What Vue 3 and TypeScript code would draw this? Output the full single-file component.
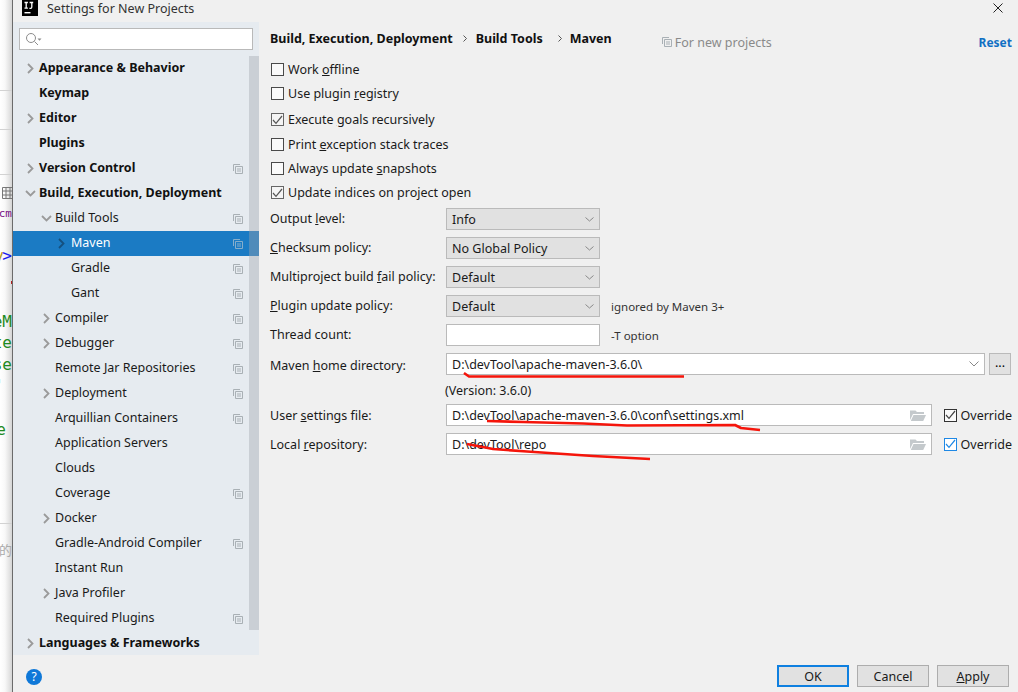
<template>
  <div class="screen">
    <!-- IDE peeking out behind the dialog -->
    <div class="behind">
      <div v-for="y in behindLines" :key="y" class="behind-line" :style="{ top: y + 'px' }"></div>
      <svg class="grid-icon" width="12" height="12" viewBox="0 0 12 12">
        <path d="M.5.5h11v11H.5zM.5 4h11M.5 8h11M4 .5v11M8 .5v11" fill="none" stroke="#777" />
      </svg>
      <span
        v-for="f in fragments"
        :key="f.text"
        class="frag"
        :class="f.kind"
        :style="{ top: f.top + 'px', right: (f.right ?? 0) + 'px' }"
      >{{ f.text }}</span>
      <div class="red-dot"></div>
    </div>

    <div class="dialog">
      <header class="titlebar">
        <svg class="logo" width="16" height="16" viewBox="0 0 16 16">
          <rect width="16" height="16" fill="#000" />
          <rect x="2.500" y="12" width="6" height="1.400" fill="#fff" />
          <path d="M2.500 2.500h3.400M4.200 2.500v5.600M2.500 8.100h3.400M7.600 2.500h3.600M9.800 2.500v4.600q0 1.200-1.200 1.200H7.400" fill="none" stroke="#fff" stroke-width="1.300" />
        </svg>
        <span class="title">Settings for New Projects</span>
        <svg class="close" width="10" height="10" viewBox="0 0 10 10">
          <path d="M.5.5l9 9M9.500.5l-9 9" stroke="#222" fill="none" />
        </svg>
      </header>

      <div class="body">
        <aside class="sidebar">
          <div class="search">
            <svg width="20" height="14" viewBox="0 0 20 14">
              <circle cx="6" cy="6" r="4.500" fill="none" stroke="#8c8c8c" />
              <path d="M9.500 9.500l3.500 3.500" stroke="#8c8c8c" fill="none" />
              <path d="M12.500 6.500h4l-2 2.200z" fill="#8c8c8c" />
            </svg>
          </div>
          <div class="tree-wrap">
            <ul class="tree">
              <li
                v-for="item in treeItems"
                :key="item.label"
                class="row"
                :class="[`lvl-${item.level}`, { selected: item.selected, bold: item.level === 0 }]"
              >
                <span class="arrow">
                  <svg v-if="item.arrow === 'right'" width="9" height="11" viewBox="0 0 9 11">
                    <path d="M2 1l4.500 4.500L2 10" fill="none" :stroke="item.selected ? '#15507f' : '#9a9a9a'" stroke-width="1.800" />
                  </svg>
                  <svg v-else-if="item.arrow === 'down'" width="11" height="9" viewBox="0 0 11 9">
                    <path d="M1 2l4.500 4.500L10 2" fill="none" stroke="#9a9a9a" stroke-width="1.800" />
                  </svg>
                </span>
                <span class="label">{{ item.label }}</span>
                <svg v-if="item.copy" class="copy" width="10" height="10" viewBox="0 0 10 10">
                  <path d="M.5 7V.5H7M2.500 2.500h7v7h-7zM4 5h4M4 7h4" fill="none" :stroke="item.selected ? '#87aecb' : '#a9b0b5'" />
                </svg>
              </li>
            </ul>
            <div class="scrollbar"></div>
          </div>
        </aside>

        <main class="content">
          <div class="crumbs">
            <b>Build, Execution, Deployment</b>
            <svg class="sep" width="4" height="7" viewBox="0 0 4 7">
              <path d="M.5.5l3 3-3 3" fill="none" stroke="#555" />
            </svg>
            <b>Build Tools</b>
            <svg class="sep second" width="4" height="7" viewBox="0 0 4 7">
              <path d="M.5.5l3 3-3 3" fill="none" stroke="#555" />
            </svg>
            <b>Maven</b>
            <span class="scope">
              <svg width="10" height="10" viewBox="0 0 10 10">
                <path d="M.5 7V.5H7M2.500 2.500h7v7h-7zM4 5h4M4 7h4" fill="none" stroke="#a9b0b5" />
              </svg>
              For new projects
            </span>
            <a class="reset">Reset</a>
          </div>

          <div class="checks">
            <label v-for="c in checks" :key="c.pre + c.post" class="check" :style="{ marginTop: c.mt + 'px' }">
              <span class="box" :class="{ on: c.on }">
                <svg v-if="c.on" width="11" height="10" viewBox="0 0 11 10">
                  <path d="M1 5l3 3.400L10 1" fill="none" stroke="#555" stroke-width="1.200" />
                </svg>
              </span>
              <span>{{ c.pre }}<u>{{ c.key }}</u>{{ c.post }}</span>
            </label>
          </div>

          <div class="form">
            <div v-for="s in selects" :key="s.post" class="field">
              <span class="name">{{ s.pre }}<u>{{ s.key }}</u>{{ s.post }}</span>
              <div class="select">
                {{ s.value }}
                <svg width="9" height="5" viewBox="0 0 9 5">
                  <path d="M.5.5l4 3.500 4-3.500" fill="none" stroke="#888" />
                </svg>
              </div>
              <span v-if="s.hint" class="hint">{{ s.hint }}</span>
            </div>
            <div class="field">
              <span class="name">Thread count:</span>
              <div class="input small"></div>
              <span class="hint">-T option</span>
            </div>
          </div>

          <div class="paths">
            <div class="field home">
              <span class="name">Maven <u>h</u>ome directory:</span>
              <div class="input grow">
                D:\devTool\apache-maven-3.6.0\
                <svg width="10" height="6" viewBox="0 0 10 6">
                  <path d="M.5.500L5 5l4.500-4.500" fill="none" stroke="#888" />
                </svg>
              </div>
              <button class="dots">...</button>
            </div>
            <div class="version">(Version: 3.6.0)</div>
            <div v-for="p in files" :key="p.value" class="field file">
              <span class="name">{{ p.pre }}<u>{{ p.key }}</u>{{ p.post }}</span>
              <div class="input grow">
                {{ p.value }}
                <svg width="16" height="12" viewBox="0 0 16 12">
                  <path d="M0 1.500h5.500l1.500 1.500h7v2H3L0 11z" fill="#c4c9cc" />
                  <path d="M3.500 6H16l-2.800 6H.8z" fill="#c4c9cc" />
                </svg>
              </div>
              <label class="check override">
                <span class="box" :class="{ dark: !p.focus, focus: p.focus }">
                  <svg width="11" height="10" viewBox="0 0 11 10">
                    <path d="M1 5l3 3.400L10 1" fill="none" :stroke="p.focus ? '#1e88e5' : '#444'" stroke-width="1.200" />
                  </svg>
                </span>
                <span>Override</span>
              </label>
            </div>
          </div>
        </main>
      </div>

      <footer class="footer">
        <span class="help">?</span>
        <button class="btn primary">OK</button>
        <button class="btn">Cancel</button>
        <button class="btn"><u>A</u>pply</button>
      </footer>
    </div>

    <!-- red marks someone drew over the screenshot -->
    <svg class="scribble" width="1018" height="692" viewBox="0 0 1018 692">
      <g fill="none" stroke="#f5150b" stroke-width="2.600" stroke-linejoin="round">
        <path d="M464 373l5 3.500H684" />
        <path d="M487 421L523 422L583 423.500L627 425.500L735 425L741 428L760 430" />
        <path d="M467 444L493 449L527 451.500L593 456L650 459" />
      </g>
    </svg>
  </div>
</template>

<script setup lang="ts">
interface TreeItem {
  label: string
  level: number
  arrow?: 'right' | 'down'
  copy?: boolean
  selected?: boolean
}

interface Fragment {
  text: string
  kind: string
  top: number
  right?: number
}

const behindLines = [90, 129, 174, 523]

const fragments: Fragment[] = [
  { text: 'cm', kind: 'purple', top: 205 },
  { text: 'y', kind: 'olive', top: 247, right: 8 },
  { text: '>', kind: 'blue', top: 247 },
  { text: 'eM', kind: 'green', top: 313 },
  { text: 'te', kind: 'green', top: 334 },
  { text: 'se', kind: 'green', top: 356 },
  { text: "'", kind: 'green', top: 377, right: 8 },
  { text: 'e', kind: 'green', top: 421, right: 6 },
  { text: '据的', kind: 'grey', top: 541 },
]

const treeItems: TreeItem[] = [
  { label: 'Appearance & Behavior', level: 0, arrow: 'right' },
  { label: 'Keymap', level: 0 },
  { label: 'Editor', level: 0, arrow: 'right' },
  { label: 'Plugins', level: 0 },
  { label: 'Version Control', level: 0, arrow: 'right', copy: true },
  { label: 'Build, Execution, Deployment', level: 0, arrow: 'down' },
  { label: 'Build Tools', level: 1, arrow: 'down', copy: true },
  { label: 'Maven', level: 2, arrow: 'right', copy: true, selected: true },
  { label: 'Gradle', level: 2, copy: true },
  { label: 'Gant', level: 2, copy: true },
  { label: 'Compiler', level: 1, arrow: 'right', copy: true },
  { label: 'Debugger', level: 1, arrow: 'right', copy: true },
  { label: 'Remote Jar Repositories', level: 1, copy: true },
  { label: 'Deployment', level: 1, arrow: 'right', copy: true },
  { label: 'Arquillian Containers', level: 1, copy: true },
  { label: 'Application Servers', level: 1 },
  { label: 'Clouds', level: 1 },
  { label: 'Coverage', level: 1, copy: true },
  { label: 'Docker', level: 1, arrow: 'right' },
  { label: 'Gradle-Android Compiler', level: 1, copy: true },
  { label: 'Instant Run', level: 1 },
  { label: 'Java Profiler', level: 1, arrow: 'right' },
  { label: 'Required Plugins', level: 1, copy: true },
  { label: 'Languages & Frameworks', level: 0, arrow: 'right' },
]

// the rows in the reference are not evenly spaced
const checks = [
  { pre: 'Work ', key: 'o', post: 'ffline', on: false, mt: 0 },
  { pre: 'Use plugin ', key: 'r', post: 'egistry', on: false, mt: 1 },
  { pre: 'Execute ', key: 'g', post: 'oals recursively', on: true, mt: 3 },
  { pre: 'Print ', key: 'e', post: 'xception stack traces', on: false, mt: 2 },
  { pre: 'Always update ', key: 's', post: 'napshots', on: false, mt: 1 },
  { pre: 'Update indices on project open', key: '', post: '', on: true, mt: 1 },
]

const selects = [
  { pre: 'Output ', key: 'l', post: 'evel:', value: 'Info' },
  { pre: '', key: 'C', post: 'hecksum policy:', value: 'No Global Policy' },
  { pre: 'Multiproject build ', key: 'f', post: 'ail policy:', value: 'Default' },
  { pre: '', key: 'P', post: 'lugin update policy:', value: 'Default', hint: 'ignored by Maven 3+' },
]

const files = [
  { pre: 'User ', key: 's', post: 'ettings file:', value: 'D:\\devTool\\apache-maven-3.6.0\\conf\\settings.xml', focus: false },
  { pre: 'Local ', key: 'r', post: 'epository:', value: 'D:\\devTool\\repo', focus: true },
]
</script>

<style>
html,
body {
  margin: 0;
  background: #f0f0f0;
}
</style>

<style scoped>
.screen {
  position: relative;
  display: flex;
  width: 1018px;
  height: 692px;
  overflow: hidden;
  font-family: "Noto Sans", "Noto Sans CJK SC", "Liberation Sans", sans-serif;
  font-size: 12.5px;
  color: #1a1a1a;
}

.behind {
  position: relative;
  flex: 0 0 12px;
  background: linear-gradient(to right, #fff 0, #f8f8f8 5px, #d6d6d6 12px);
  overflow: hidden;
}
.behind-line {
  position: absolute;
  left: 0;
  width: 12px;
  height: 1px;
  background: #d2d2d2;
}
.grid-icon {
  position: absolute;
  left: 2px;
  top: 187px;
}
.red-dot {
  position: absolute;
  left: 11px;
  top: 281px;
  width: 2px;
  height: 3px;
  background: #b02020;
}
.frag {
  position: absolute;
  font-family: "DejaVu Sans Mono", monospace;
  font-size: 16px;
  line-height: 18px;
  white-space: nowrap;
}
.purple { color: #7a0f86; font-size: 11px; }
.blue { color: #1a1af0; }
.olive { color: #b59a1c; }
.green { color: #1f8a1f; }
.grey { color: #aaa; font-size: 13px; font-family: "Noto Sans CJK SC", sans-serif; }

.dialog {
  flex: 1;
  display: flex;
  flex-direction: column;
  border-left: 1px solid #6b6b6b;
  background: #f0f0f0;
  min-width: 0;
}

.titlebar {
  flex: 0 0 22px;
  display: flex;
  align-items: center;
  padding-left: 9px;
}
.logo {
  margin-top: -6px;
}
.title {
  margin-left: 9px;
  margin-top: -6px;
  color: #333;
}
.close {
  margin-left: auto;
  margin-right: 15px;
  margin-top: -6px;
}

.body {
  flex: 1;
  display: flex;
  min-height: 0;
}

.sidebar {
  flex: 0 0 246px;
  background: #e6ebf0;
  display: flex;
  flex-direction: column;
  overflow: hidden;
}
.search {
  box-sizing: border-box;
  flex: 0 0 22px;
  margin: 6px 6px 0;
  border: 1px solid #b9b9b9;
  background: #fff;
  display: flex;
  align-items: center;
  padding-left: 5px;
}
.tree-wrap {
  position: relative;
  margin-top: 6px;
}
.tree {
  list-style: none;
  margin: 0;
  padding: 0;
}
.row {
  display: flex;
  align-items: center;
  height: 25px;
  white-space: nowrap;
}
.row.bold {
  font-weight: 700;
  color: #111;
}
.row.selected {
  background: #1b7bc4;
  color: #fff;
}
.label {
  margin-top: -2px;
}
.arrow {
  width: 12px;
  height: 12px;
  display: flex;
  align-items: center;
  justify-content: center;
}
.lvl-0 .arrow { margin-left: 11px; margin-right: 3px; }
.lvl-1 .arrow { margin-left: 27px; margin-right: 3px; }
.lvl-2 .arrow { margin-left: 42px; margin-right: 4px; }
.copy {
  position: absolute;
  left: 220px;
}
.scrollbar {
  position: absolute;
  top: 0;
  right: 0;
  width: 10px;
  height: 574px;
  background: rgba(160, 165, 172, 0.4);
}

.content {
  flex: 1;
  min-width: 0;
  padding: 0 6px 0 11px;
}
.crumbs {
  display: flex;
  align-items: center;
  height: 32px;
}
.crumbs b {
  font-weight: 700;
  color: #111;
}
.sep {
  margin: 0 9px 0 10px;
}
.sep.second {
  margin: 0 8px 0 15px;
}
.scope {
  display: flex;
  align-items: center;
  gap: 3px;
  margin-left: 50px;
  margin-top: 8px;
  color: #8a8a8a;
}
.reset {
  margin-left: auto;
  margin-top: 8px;
  font-weight: 700;
  font-size: 12px;
  color: #1170c4;
}

.checks {
  margin-top: 4px;
}
.check {
  display: flex;
  align-items: center;
  gap: 4px;
  height: 23px;
}
.box {
  box-sizing: border-box;
  flex: 0 0 13px;
  height: 13px;
  margin-left: 1px;
  border: 1px solid #4a4a4a;
  background: #fafafa;
  display: flex;
  align-items: center;
  justify-content: center;
}
.box.on {
  background: #f5f5f5;
  border-color: #666;
}
.box.dark {
  border-color: #333;
}
.box.focus {
  border-color: #1e88e5;
  background: #fff;
}

.form {
  margin-top: 4px;
  display: flex;
  flex-direction: column;
  gap: 7px;
}
.field {
  display: flex;
  align-items: center;
}
.name {
  flex: 0 0 176px;
  margin-top: -2px;
  white-space: nowrap;
}
.home .name {
  margin-top: 2px;
}
.file .name {
  margin-top: 0;
}
.select,
.input {
  box-sizing: border-box;
  display: flex;
  align-items: center;
  justify-content: space-between;
  height: 22px;
  padding: 0 5px;
  border: 1px solid #bababa;
  white-space: nowrap;
}
.select {
  flex: 0 0 154px;
  background: #e1e1e1;
}
.input {
  background: #fff;
}
.input.small {
  flex: 0 0 154px;
}
.hint {
  margin-left: 11px;
  font-size: 11.5px;
  color: #333;
}
.input.grow {
  flex: 1;
  min-width: 0;
}

.paths {
  margin-top: 7px;
}
.dots {
  flex: 0 0 22px;
  height: 22px;
  margin: 0 1px 0 4px;
  padding: 0 0 4px;
  border: 1px solid #bababa;
  background: #e1e1e1;
  font: inherit;
}
.version {
  box-sizing: border-box;
  height: 29px;
  margin-left: 175px;
  padding-top: 2px;
  display: flex;
  align-items: center;
}
.file {
  margin-bottom: 7px;
}
.override {
  flex: 0 0 68px;
  height: 22px;
  margin-left: 12px;
}
.override .box {
  margin-left: 0;
}

.footer {
  flex: 0 0 37px;
  box-sizing: border-box;
  display: flex;
  align-items: flex-start;
  gap: 8px;
  padding: 10px 9px 0 13px;
}
.help {
  width: 16px;
  height: 16px;
  margin-top: 4px;
  margin-right: auto;
  border-radius: 50%;
  background: #0f78d8;
  color: #fff;
  font-size: 12px;
  line-height: 16px;
  text-align: center;
}
.btn {
  box-sizing: border-box;
  width: 72px;
  height: 22px;
  padding: 0;
  border: 1px solid #adadad;
  background: #e1e1e1;
  font: inherit;
  color: #1a1a1a;
}
.btn.primary {
  border: 2px solid #0f80e0;
}
.scribble {
  position: absolute;
  left: 0;
  top: 0;
  pointer-events: none;
}
</style>
